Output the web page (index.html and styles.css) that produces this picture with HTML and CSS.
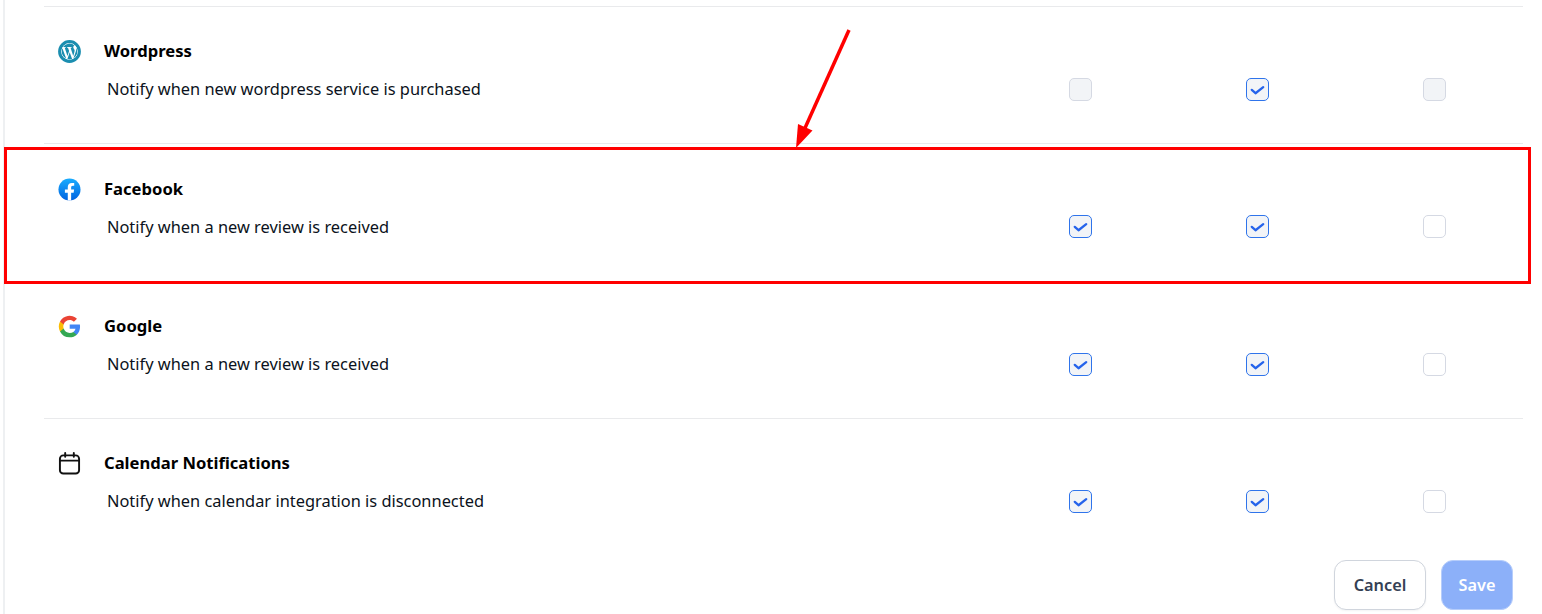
FILE: index.html
```html
<!DOCTYPE html>
<html lang="en">
<head>
    <meta charset="UTF-8">
    <meta name="viewport" content="width=device-width, initial-scale=1.0">
    <title>Notification settings</title>
    <link rel="stylesheet" href="styles.css">
</head>
<body>
    <svg class="sprite" width="0" height="0">
        <symbol id="tick" viewBox="0 0 22 22">
            <path d="M5 11.400l3.900 3.500 8.100-6.300" fill="none" stroke="#2563eb" stroke-width="2.400" stroke-linecap="round" stroke-linejoin="round"/>
        </symbol>
    </svg>

    <div class="panel">
        <div class="row">
            <div class="info">
                <div class="heading">
                    <svg class="icon" viewBox="0 0 24 24">
                        <circle cx="12" cy="12" r="10.200" fill="none" stroke="#1b8eb0" stroke-width="3.400"/>
                        <circle cx="12" cy="12" r="8.600" fill="#fff"/>
                        <path d="M3.900 12c0 3.200 1.900 6 4.600 7.300L4.600 8.700A8 8 0 0 0 3.900 12zm13.500-.4c0-1-.4-1.700-.7-2.200-.4-.7-.8-1.300-.8-2 0-.8.6-1.500 1.400-1.500h.1A8.100 8.100 0 0 0 5.200 7.400h.5c.8 0 2.200-.1 2.200-.1.400 0 .5.600 0 .7 0 0-.4 0-.9.100l2.900 8.500 1.700-5.100-1.200-3.400c-.4 0-.8-.1-.8-.1-.4 0-.4-.7.100-.7 0 0 1.300.1 2.100.1s2.200-.1 2.200-.1c.4 0 .5.600 0 .7 0 0-.4 0-.9.100l2.800 8.500.8-2.600c.3-1.100.6-1.900.6-2.600zM12.200 12.900l-2.400 7a8.100 8.100 0 0 0 5-.1l-.1-.1-2.500-6.800zm6.900-4.600c0 .3.100.6.100.9 0 .8-.2 1.800-.6 2.900l-2.500 7.100a8.100 8.100 0 0 0 3-11z" fill="#1b8eb0"/>
                    </svg>
                    <span class="title">Wordpress</span>
                </div>
                <p class="desc">Notify when new wordpress service is purchased</p>
            </div>
            <div class="cell"><span class="check disabled"></span></div>
            <div class="cell"><span class="check disabled on"><svg><use href="#tick"/></svg></span></div>
            <div class="cell"><span class="check disabled"></span></div>
        </div>

        <div class="row">
            <div class="info">
                <div class="heading">
                    <svg class="icon" viewBox="0 0 24 24">
                        <defs>
                            <linearGradient id="fbBlue" x1="0" y1="0" x2="0" y2="1">
                                <stop offset="0" stop-color="#18acfe"/>
                                <stop offset="1" stop-color="#0163e0"/>
                            </linearGradient>
                        </defs>
                        <circle cx="12" cy="12" r="11.500" fill="url(#fbBlue)"/>
                        <path d="M16.300 15.300l.5-3.300h-3.100V9.900c0-.9.400-1.800 1.800-1.800h1.400V5.300s-1.300-.2-2.500-.2c-2.600 0-4.200 1.600-4.200 4.400V12H7.200v3.300h3V23.400a12 12 0 0 0 3.500 0v-8.100z" fill="#fff"/>
                    </svg>
                    <span class="title">Facebook</span>
                </div>
                <p class="desc">Notify when a new review is received</p>
            </div>
            <div class="cell"><span class="check on"><svg><use href="#tick"/></svg></span></div>
            <div class="cell"><span class="check on"><svg><use href="#tick"/></svg></span></div>
            <div class="cell"><span class="check"></span></div>
        </div>

        <div class="row">
            <div class="info">
                <div class="heading">
                    <svg class="icon" viewBox="0 0 24 24">
                        <path d="M23 12.300c0-.8-.1-1.600-.2-2.300H12.200v4.300h6.100a5.200 5.200 0 0 1-2.300 3.400v2.800h3.700c2.100-2 3.300-4.900 3.300-8.200z" fill="#4285f4"/>
                        <path d="M12.200 23.200c3 0 5.600-1 7.500-2.700L16 17.700c-1 .7-2.300 1.100-3.800 1.100-2.900 0-5.400-2-6.300-4.600H2.100v2.900a11.300 11.300 0 0 0 10.100 6.100z" fill="#34a853"/>
                        <path d="M5.900 14.200a6.800 6.800 0 0 1 0-4.400V6.900H2.100a11.300 11.300 0 0 0 0 10.200z" fill="#fbbc05"/>
                        <path d="M12.200 5.300c1.700 0 3.200.6 4.400 1.700l3.200-3.200A11.300 11.300 0 0 0 2.100 6.900l3.800 2.900c.9-2.600 3.400-4.500 6.300-4.500z" fill="#ea4335"/>
                    </svg>
                    <span class="title">Google</span>
                </div>
                <p class="desc">Notify when a new review is received</p>
            </div>
            <div class="cell"><span class="check on"><svg><use href="#tick"/></svg></span></div>
            <div class="cell"><span class="check on"><svg><use href="#tick"/></svg></span></div>
            <div class="cell"><span class="check"></span></div>
        </div>

        <div class="row">
            <div class="info">
                <div class="heading">
                    <svg class="icon" viewBox="0 0 24 24" fill="none" stroke="#111" stroke-width="2" stroke-linecap="round" stroke-linejoin="round">
                        <rect x="2" y="3.500" width="20" height="19" rx="3.500"/>
                        <path d="M2 9h20M7.500 1v4M16.500 1v4"/>
                    </svg>
                    <span class="title">Calendar Notifications</span>
                </div>
                <p class="desc">Notify when calendar integration is disconnected</p>
            </div>
            <div class="cell"><span class="check on"><svg><use href="#tick"/></svg></span></div>
            <div class="cell"><span class="check on"><svg><use href="#tick"/></svg></span></div>
            <div class="cell"><span class="check"></span></div>
        </div>

        <div class="actions">
            <button class="btn btn-cancel">Cancel</button>
            <button class="btn btn-save">Save</button>
        </div>
    </div>

    <!-- annotation drawn over the screenshot -->
    <div class="highlight"></div>
    <svg class="arrow" width="1542" height="614" viewBox="0 0 1542 614">
        <path d="M849 30L805 128" stroke="#ff0000" stroke-width="3.500" fill="none"/>
        <path d="M796 148L798 124 812.500 130.500z" fill="#ff0000"/>
    </svg>
</body>
</html>
```

FILE: styles.css
```css
* {
    margin: 0;
    padding: 0;
    box-sizing: border-box;
}

html, body {
    height: 100%;
    overflow: hidden;
}

body {
    font-family: "Noto Sans", "Open Sans", sans-serif;
    background: white;
    color: #111;
    padding: 6px 0 0 3px;
    position: relative;
}

.sprite {
    position: absolute;
}

.panel {
    border-left: 2px solid #eef0f2;
    padding: 0 19px 0 39px;
    margin-top: -6px;
    padding-top: 6px;
    min-height: 620px;
}

.row {
    display: grid;
    grid-template-columns: 1fr 177px 177px 177px;
    height: 137.33px;
    border-top: 1px solid #e9eaec;
    padding-top: 28.8px;
}

.row:nth-child(3) {
    border-top-color: transparent;
}

.heading {
    display: flex;
    align-items: center;
    gap: 23px;
    padding-left: 14px;
    height: 30px;
}

.icon {
    width: 23px;
    height: 23px;
    flex-shrink: 0;
    margin-top: 2px;
}

.title {
    font-size: 16.6px;
    font-weight: 700;
    color: #000;
}

.desc {
    font-size: 16.4px;
    line-height: 24px;
    color: #0b1220;
    margin-top: 11.5px;
    padding-left: 63px;
}

.cell {
    display: flex;
    justify-content: center;
    align-items: flex-start;
    padding-top: 42.200px;
}

.check {
    width: 23px;
    height: 23px;
    border: 1px solid #d5d9e3;
    border-radius: 5px;
    background: white;
    display: block;
}

.check svg {
    display: block;
    width: 21px;
    height: 21px;
}

.check.disabled {
    background: #f2f4f7;
}

.check.on {
    background: #f2f4f7;
    border-color: #2f74eb;
}

.actions {
    display: flex;
    justify-content: flex-end;
    gap: 15px;
    padding: 5px 10px 0 0;
}

.btn {
    height: 50px;
    border-radius: 12px;
    font-family: inherit;
    font-size: 16.3px;
    font-weight: 600;
}

.btn-cancel {
    width: 92px;
    background: white;
    color: #344054;
    border: 1px solid #d0d5dd;
    box-shadow: 0 1px 2px rgba(16, 24, 40, 0.05);
}

.btn-save {
    width: 72px;
    background: #8cb0f9;
    color: white;
    border: 1px solid #b6cdfb;
}

.highlight {
    position: absolute;
    left: 4px;
    top: 147px;
    width: 1527px;
    height: 137px;
    border: 3px solid #ff0000;
}

.arrow {
    position: absolute;
    left: 0;
    top: 0;
    pointer-events: none;
}
```
